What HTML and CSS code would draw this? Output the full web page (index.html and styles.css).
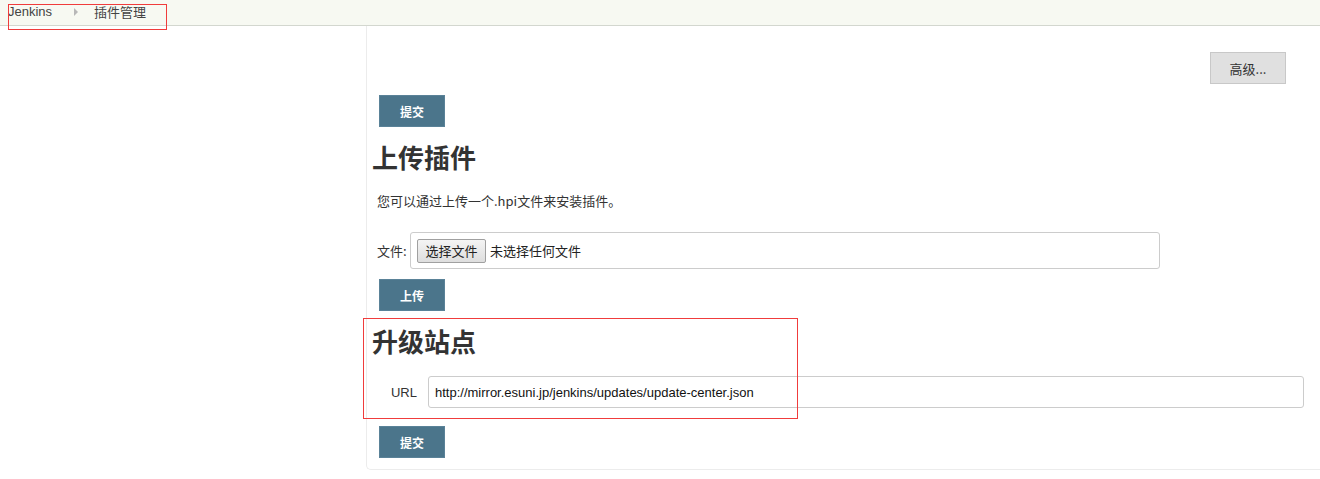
FILE: index.html
```html
<!DOCTYPE html>
<html lang="zh-CN">
<head>
    <meta charset="UTF-8">
    <title>插件管理 [Jenkins]</title>
    <link rel="stylesheet" href="styles.css">
</head>
<body>
    <div class="breadcrumb-bar">
        <a class="crumb" href="#">Jenkins</a>
        <span class="crumb-arrow"></span>
        <a class="crumb" href="#">插件管理</a>
    </div>

    <div class="page">
        <div class="side-panel"></div>

        <div class="main-panel">
            <div class="advanced-row">
                <button type="button" class="plain-btn">高级...</button>
            </div>

            <button type="button" class="submit-btn">提交</button>

            <h1>上传插件</h1>
            <p class="hint">您可以通过上传一个.hpi文件来安装插件。</p>

            <div class="file-row">
                <span class="field-label">文件:</span>
                <div class="file-box">
                    <span class="file-btn">选择文件</span>
                    <span class="file-name">未选择任何文件</span>
                </div>
            </div>

            <button type="button" class="submit-btn upload-btn">上传</button>

            <h1 class="site-title">升级站点</h1>
            <div class="url-row">
                <label class="url-label" for="siteUrl">URL</label>
                <input type="text" id="siteUrl" class="url-input" value="http://mirror.esuni.jp/jenkins/updates/update-center.json">
            </div>

            <button type="button" class="submit-btn last-btn">提交</button>
        </div>
    </div>

    <div class="mark mark-crumbs"></div>
    <div class="mark mark-site"></div>
</body>
</html>
```

FILE: styles.css
```css
* {
    margin: 0;
    padding: 0;
    box-sizing: border-box;
}

body {
    font-family: "Liberation Sans", Arial, "Noto Sans CJK SC", sans-serif;
    font-size: 13px;
    color: #333;
    background: #fff;
    position: relative;
}

.breadcrumb-bar {
    height: 26px;
    background: #f7f9f2;
    border-bottom: 1px solid #d3d7cf;
    display: flex;
    align-items: center;
    padding-left: 8px;
    padding-bottom: 2px;
}

.crumb {
    color: #444;
    text-decoration: none;
    font-size: 13px;
}

.crumb-arrow {
    width: 0;
    height: 0;
    border-left: 4px solid #b8b8b8;
    border-top: 4px solid transparent;
    border-bottom: 4px solid transparent;
    margin: 1px 16px 0 22px;
}

.page {
    display: flex;
}

.side-panel {
    width: 366px;
    flex-shrink: 0;
}

.main-panel {
    flex: 1;
    border-left: 1px solid #ececec;
    border-bottom: 1px solid #ececec;
    border-bottom-left-radius: 5px;
    padding: 26px 0 11px 5px;
}

.advanced-row {
    display: flex;
    justify-content: flex-end;
    padding-right: 34px;
    margin-bottom: 11px;
}

.plain-btn {
    width: 76px;
    height: 32px;
    background: #e0e0e0;
    border: 1px solid #c8c8c8;
    color: #333;
    font-family: "Noto Sans CJK SC", sans-serif;
    font-size: 13px;
}

.submit-btn {
    display: block;
    width: 66px;
    height: 32px;
    margin-left: 7px;
    background: #4b758b;
    border: 1px solid #5a8298;
    color: #fff;
    font-family: "Noto Sans CJK SC", sans-serif;
    font-size: 12px;
    font-weight: 700;
}

h1 {
    font-family: "Noto Sans CJK SC", sans-serif;
    font-size: 26px;
    line-height: 32px;
    font-weight: 700;
    color: #333;
    margin-top: 14px;
}

.hint {
    font-family: "Noto Sans CJK SC", sans-serif;
    font-size: 13px;
    line-height: 18px;
    margin: 19px 0 0 5px;
}

.file-row {
    display: flex;
    align-items: center;
    margin: 22px 0 0 5px;
}

.field-label {
    font-family: "Noto Sans CJK SC", sans-serif;
    width: 33px;
}

.file-box {
    width: 750px;
    height: 37px;
    border: 1px solid #ccc;
    border-radius: 3px;
    display: flex;
    align-items: center;
    padding-left: 6px;
}

.file-btn {
    height: 24px;
    width: 69px;
    display: flex;
    align-items: center;
    justify-content: center;
    background: linear-gradient(#f4f4f4, #dedede);
    border: 1px solid #a0a0a0;
    border-radius: 2px;
    font-family: "Noto Sans CJK SC", sans-serif;
    font-size: 13px;
    color: #222;
}

.file-name {
    font-family: "Noto Sans CJK SC", sans-serif;
    font-size: 13px;
    color: #222;
    margin-left: 4px;
}

.upload-btn {
    margin-top: 10px;
}

.site-title {
    margin-top: 14px;
}

.url-row {
    display: flex;
    align-items: center;
    margin-top: 19px;
    padding-right: 16px;
}

.url-label {
    width: 56px;
    text-align: right;
    padding-right: 11px;
    color: #333;
}

.url-input {
    flex: 1;
    height: 32px;
    border: 1px solid #ccc;
    border-radius: 3px;
    padding-left: 6px;
    font-family: "Liberation Sans", Arial, sans-serif;
    font-size: 13px;
    color: #111;
}

.last-btn {
    margin-top: 18px;
}

/* annotation boxes over the screenshot */
.mark {
    position: absolute;
    border: 1px solid #f03c3c;
}

.mark-crumbs {
    left: 8px;
    top: 4px;
    width: 159px;
    height: 26px;
}

.mark-site {
    left: 363px;
    top: 318px;
    width: 435px;
    height: 101px;
}
```
